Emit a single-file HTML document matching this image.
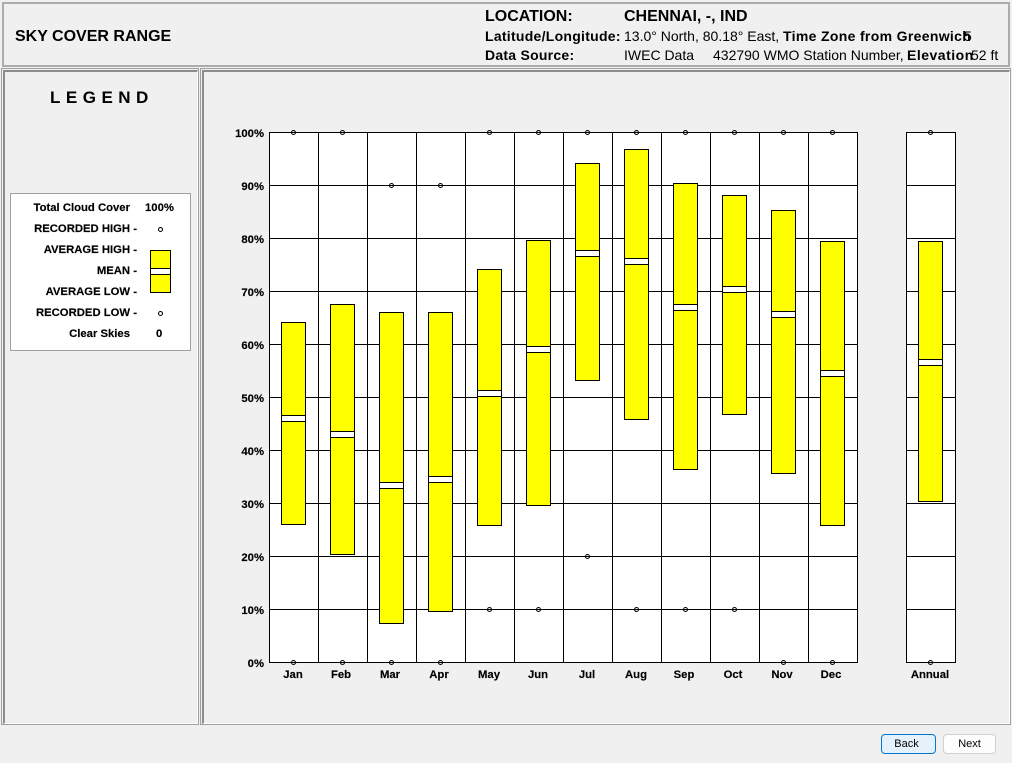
<!DOCTYPE html>
<html>
<head>
<meta charset="utf-8">
<title>Sky Cover Range</title>
<style>
html,body{margin:0;padding:0;background:#f0f0f0;}
body{width:1012px;height:763px;overflow:hidden;position:relative;font-family:"Liberation Sans",Arial,sans-serif;color:#000;}
.outer{position:absolute;box-sizing:border-box;border:1px solid #a0a0a0;background:#f0f0f0;}
.inner{position:absolute;left:1px;top:1px;right:0;bottom:0;box-sizing:border-box;border-top:2px solid #8c8c8c;border-left:2px solid #8c8c8c;border-right:1px solid #fff;border-bottom:1px solid #fff;}
.t{position:absolute;white-space:nowrap;line-height:16px;font-size:14px;}
.b{font-weight:bold;}
.l{position:absolute;white-space:nowrap;font-size:11.3px;font-weight:bold;line-height:14px;text-align:right;-webkit-text-stroke:0.15px #000;}
svg{position:absolute;left:0;top:0;}
svg text{font-family:"Liberation Sans",Arial,sans-serif;font-size:11.3px;font-weight:bold;fill:#000;stroke:#000;stroke-width:0.15px;}
.btn{position:absolute;box-sizing:border-box;height:20px;top:734px;font-size:11px;line-height:18px;text-align:center;border-radius:4px;color:#000;}
</style>
</head>
<body>
<div class="outer" style="left:2px;top:2px;width:1008px;height:65px;border:2px solid #acacac;"></div>
<div class="outer" style="left:1px;top:68px;width:198px;height:657px;"><div class="inner"></div></div>
<div class="outer" style="left:200px;top:68px;width:811px;height:657px;"><div class="inner"></div></div>

<div class="t b" style="left:15px;top:29px;font-size:16px;">SKY COVER RANGE</div>
<div class="t b" style="left:485px;top:9px;font-size:16px;">LOCATION:</div>
<div class="t b" style="left:624px;top:9px;font-size:16px;">CHENNAI, -, IND</div>
<div class="t b" style="left:485px;top:28px;letter-spacing:0.27px;">Latitude/Longitude:</div>
<div class="t" style="left:624px;top:28px;">13.0° North, 80.18° East,</div>
<div class="t b" style="left:783px;top:28px;letter-spacing:0.33px;">Time Zone from Greenwich</div>
<div class="t" style="left:964px;top:28px;">5</div>
<div class="t b" style="left:485px;top:47px;letter-spacing:0.25px;">Data Source:</div>
<div class="t" style="left:624px;top:47px;">IWEC Data</div>
<div class="t" style="left:713px;top:47px;">432790 WMO Station Number,</div>
<div class="t b" style="left:907px;top:47px;letter-spacing:0.5px;">Elevation</div>
<div class="t" style="left:971px;top:47px;">52 ft</div>

<div class="t b" style="left:50px;top:90px;font-size:17px;letter-spacing:5.5px;">LEGEND</div>

<div style="position:absolute;left:10px;top:193px;width:181px;height:158px;box-sizing:border-box;background:#fff;border:1px solid #a0a0a0;"></div>
<div class="l" style="right:882px;top:201px;">Total Cloud Cover</div>
<div class="l" style="left:145px;top:201px;">100%</div>
<div class="l" style="right:875px;top:222px;">RECORDED HIGH -</div>
<div class="l" style="right:875px;top:243px;">AVERAGE HIGH -</div>
<div class="l" style="right:875px;top:264px;">MEAN -</div>
<div class="l" style="right:875px;top:285px;">AVERAGE LOW -</div>
<div class="l" style="right:875px;top:306px;">RECORDED LOW -</div>
<div class="l" style="right:882px;top:327px;">Clear Skies</div>
<div class="l" style="left:156px;top:327px;">0</div>

<svg width="1012" height="763" xmlns="http://www.w3.org/2000/svg">
<g shape-rendering="crispEdges">
<rect x="269.5" y="132.5" width="588" height="530" fill="#fff" stroke="#000"/>
<rect x="906.5" y="132.5" width="49" height="530" fill="#fff" stroke="#000"/>
<path fill="none" stroke="#000" d="M269 185.5H858M269 238.5H858M269 291.5H858M269 344.5H858M269 397.5H858M269 450.5H858M269 503.5H858M269 556.5H858M269 609.5H858M906 185.5H956M906 238.5H956M906 291.5H956M906 344.5H956M906 397.5H956M906 450.5H956M906 503.5H956M906 556.5H956M906 609.5H956M318.5 132V662M367.5 132V662M416.5 132V662M465.5 132V662M514.5 132V662M563.5 132V662M612.5 132V662M661.5 132V662M710.5 132V662M759.5 132V662M808.5 132V662"/>
<g fill="#ff0" stroke="#000">
<rect x="281.5" y="322.5" width="24" height="202"/>
<rect x="330.5" y="304.5" width="24" height="250"/>
<rect x="379.5" y="312.5" width="24" height="311"/>
<rect x="428.5" y="312.5" width="24" height="299"/>
<rect x="477.5" y="269.5" width="24" height="256"/>
<rect x="526.5" y="240.5" width="24" height="265"/>
<rect x="575.5" y="163.5" width="24" height="217"/>
<rect x="624.5" y="149.5" width="24" height="270"/>
<rect x="673.5" y="183.5" width="24" height="286"/>
<rect x="722.5" y="195.5" width="24" height="219"/>
<rect x="771.5" y="210.5" width="24" height="263"/>
<rect x="820.5" y="241.5" width="24" height="284"/>
<rect x="918.5" y="241.5" width="24" height="260"/>
<rect x="150.5" y="250.5" width="20" height="42"/>
</g>
<g fill="#fff" stroke="#000">
<rect x="281.5" y="415.5" width="24" height="6"/>
<rect x="330.5" y="431.5" width="24" height="6"/>
<rect x="379.5" y="482.5" width="24" height="6"/>
<rect x="428.5" y="476.5" width="24" height="6"/>
<rect x="477.5" y="390.5" width="24" height="6"/>
<rect x="526.5" y="346.5" width="24" height="6"/>
<rect x="575.5" y="250.5" width="24" height="6"/>
<rect x="624.5" y="258.5" width="24" height="6"/>
<rect x="673.5" y="304.5" width="24" height="6"/>
<rect x="722.5" y="286.5" width="24" height="6"/>
<rect x="771.5" y="311.5" width="24" height="6"/>
<rect x="820.5" y="370.5" width="24" height="6"/>
<rect x="918.5" y="359.5" width="24" height="6"/>
<rect x="150.5" y="268.5" width="20" height="6"/>
</g>
</g>
<g fill="none" stroke="#000" stroke-width="1.1">
<circle cx="293.5" cy="132.5" r="2"/><circle cx="342.5" cy="132.5" r="2"/><circle cx="391.5" cy="185.5" r="2"/><circle cx="440.5" cy="185.5" r="2"/><circle cx="489.5" cy="132.5" r="2"/><circle cx="538.5" cy="132.5" r="2"/><circle cx="587.5" cy="132.5" r="2"/><circle cx="636.5" cy="132.5" r="2"/><circle cx="685.5" cy="132.5" r="2"/><circle cx="734.5" cy="132.5" r="2"/><circle cx="783.5" cy="132.5" r="2"/><circle cx="832.5" cy="132.5" r="2"/><circle cx="930.5" cy="132.5" r="2"/>
<circle cx="293.5" cy="662.5" r="2"/><circle cx="342.5" cy="662.5" r="2"/><circle cx="391.5" cy="662.5" r="2"/><circle cx="440.5" cy="662.5" r="2"/><circle cx="489.5" cy="609.5" r="2"/><circle cx="538.5" cy="609.5" r="2"/><circle cx="587.5" cy="556.5" r="2"/><circle cx="636.5" cy="609.5" r="2"/><circle cx="685.5" cy="609.5" r="2"/><circle cx="734.5" cy="609.5" r="2"/><circle cx="783.5" cy="662.5" r="2"/><circle cx="832.5" cy="662.5" r="2"/><circle cx="930.5" cy="662.5" r="2"/>
<circle cx="160.5" cy="229.5" r="2"/><circle cx="160.5" cy="313.5" r="2"/>
</g>
<g text-anchor="end">
<text x="264" y="137">100%</text><text x="264" y="190">90%</text><text x="264" y="243">80%</text><text x="264" y="296">70%</text><text x="264" y="349">60%</text><text x="264" y="402">50%</text><text x="264" y="455">40%</text><text x="264" y="508">30%</text><text x="264" y="561">20%</text><text x="264" y="614">10%</text><text x="264" y="667">0%</text>
</g>
<g text-anchor="middle">
<text x="293" y="678">Jan</text><text x="341" y="678">Feb</text><text x="390" y="678">Mar</text><text x="439" y="678">Apr</text><text x="489" y="678">May</text><text x="538" y="678">Jun</text><text x="587" y="678">Jul</text><text x="636" y="678">Aug</text><text x="684" y="678">Sep</text><text x="733" y="678">Oct</text><text x="782" y="678">Nov</text><text x="831" y="678">Dec</text><text x="930" y="678">Annual</text>
</g>
</svg>

<div class="btn" style="left:881px;width:55px;padding-right:4px;background:#e5f1fb;border:1px solid #0078d4;">Back</div>
<div class="btn" style="left:943px;width:53px;background:#fdfdfd;border:1px solid #d0d0d0;">Next</div>
</body>
</html>
